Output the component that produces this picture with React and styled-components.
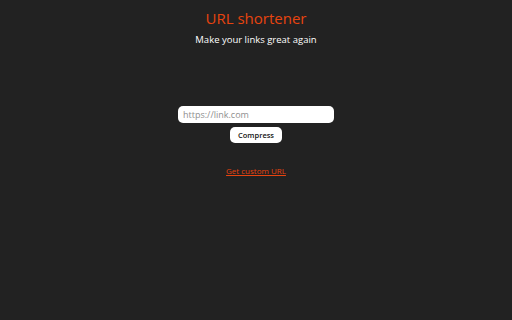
import React from "react";
import styled, { createGlobalStyle } from "styled-components";

const Global = createGlobalStyle`
  html, body { margin: 0; padding: 0; background: #222222; height: 100%; }
  body { font-family: "Open Sans", "DejaVu Sans", sans-serif; }
`;

const Page = styled.div`
  width: 512px;
  height: 320px;
  display: flex;
  flex-direction: column;
  align-items: center;
  background: #222222;
`;

const Title = styled.h1`
  margin: 8px 0 0;
  font-size: 15px;
  font-weight: 400;
  line-height: 20px;
  color: #e8440f;
`;

const Subtitle = styled.p`
  margin: 4.5px 0 0;
  font-size: 9.5px;
  font-weight: 500;
  line-height: 13px;
  color: #ffffff;
`;

const Form = styled.form`
  margin-top: 60.5px;
  display: flex;
  flex-direction: column;
  align-items: center;
  gap: 4px;
`;

const Input = styled.input`
  box-sizing: border-box;
  width: 156px;
  height: 17px;
  border: none;
  border-radius: 5px;
  background: #ffffff;
  padding: 0 5px;
  font-family: inherit;
  font-size: 9px;
  color: #222;
  outline: none;
  &::placeholder { color: #8f8f8f; }
`;

const Button = styled.button`
  box-sizing: border-box;
  width: 52px;
  height: 16px;
  border: none;
  border-radius: 5px;
  background: #ffffff;
  padding: 0;
  font-family: inherit;
  font-size: 7.5px;
  font-weight: 600;
  color: #111;
`;

const Link = styled.a`
  margin-top: 21.5px;
  font-size: 8px;
  color: #e8440f;
  text-decoration: underline;
`;

export default function App() {
  return (
    <Page>
      <Global />
      <Title>URL shortener</Title>
      <Subtitle>Make your links great again</Subtitle>
      <Form onSubmit={(e) => e.preventDefault()}>
        <Input placeholder="https://link.com" />
        <Button type="submit">Compress</Button>
      </Form>
      <Link href="#">Get custom URL</Link>
    </Page>
  );
}
